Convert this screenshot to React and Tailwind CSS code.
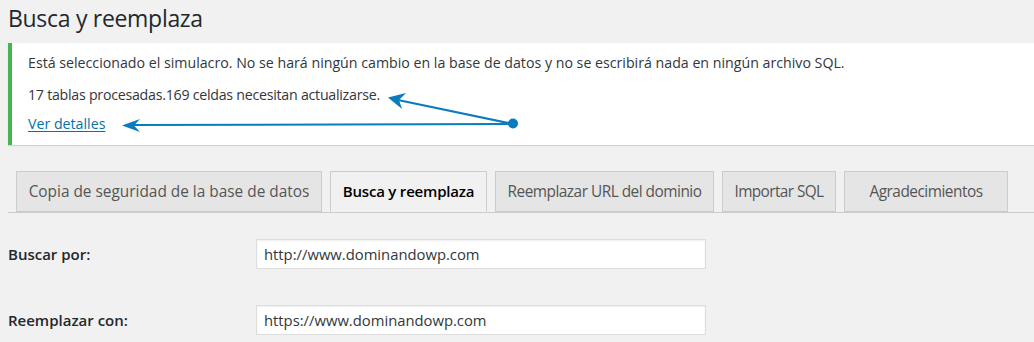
import React from 'react'

const tabs = [
  { label: 'Copia de seguridad de la base de datos', w: 'w-[306px]', t: 'tracking-normal' },
  { label: 'Busca y reemplaza', w: 'w-[157px]', active: true },
  { label: 'Reemplazar URL del dominio', w: 'w-[219px]', t: 'tracking-[-0.5px]' },
  { label: 'Importar SQL', w: 'w-[114px]', t: 'tracking-[-0.6px]' },
  { label: 'Agradecimientos', w: 'w-[164px]', t: 'tracking-[-0.5px]' },
]

export default function App() {
  return (
    <div className="relative w-[1034px] h-[342px] overflow-hidden bg-[#f1f1f1] text-[#23282d]" style={{ fontFamily: '"Open Sans", "Noto Sans", sans-serif' }}>
      {/* Título */}
      <h1 className="pl-2 pt-[1px] h-[43px] text-[23px] leading-[34px] font-normal tracking-[-0.3px]">Busca y reemplaza</h1>

      {/* Aviso */}
      <div className="ml-2 h-[102px] bg-white border-l-4 border-[#46b450] shadow-[0_1px_1px_rgba(0,0,0,0.12)] pl-4 pt-[10px] text-[14.2px] text-[#32373c]">
        <p className="leading-5">Está seleccionado el simulacro. No se hará ningún cambio en la base de datos y no se escribirá nada en ningún archivo SQL.</p>
        <p className="leading-5 mt-3 tracking-[-0.25px]">17 tablas procesadas.169 celdas necesitan actualizarse.</p>
        <a href="#" className="block w-fit leading-5 mt-[9px] text-[#0073aa] underline underline-offset-2">Ver detalles</a>
      </div>

      {/* Pestañas */}
      <div className="ml-2 mt-[27px] flex gap-2 pl-2 border-b border-[#ccc] h-[41px] items-end">
        {tabs.map((t) => (
          <div
            key={t.label}
            className={`${t.w} h-[41px] flex items-center justify-center border border-[#ccc] whitespace-nowrap ${
              t.active ? 'bg-[#f1f1f1] border-b-[#f1f1f1] text-black font-semibold text-[15px] tracking-[-0.2px]' : `bg-[#e5e5e5] text-[#555] text-[15.4px] ${t.t}`
            }`}
          >
            {t.label}
          </div>
        ))}
      </div>

      {/* Formulario */}
      <div className="flex flex-col gap-9 pt-[26px] pl-2">
        <div className="flex items-center">
          <label className="w-[248px] font-semibold text-[15px] text-[#23282d]">Buscar por:</label>
          <div className="w-[450px] h-[30px] bg-white border border-[#ddd] shadow-[inset_0_1px_2px_rgba(0,0,0,0.07)] flex items-center pl-[7px] text-[14.8px] text-[#32373c]">http://www.dominandowp.com</div>
        </div>
        <div className="flex items-center">
          <label className="w-[248px] font-semibold text-[15px] text-[#23282d]">Reemplazar con:</label>
          <div className="w-[450px] h-[30px] bg-white border border-[#ddd] shadow-[inset_0_1px_2px_rgba(0,0,0,0.07)] flex items-center pl-[7px] text-[14.8px] text-[#32373c]">https://www.dominandowp.com</div>
        </div>
      </div>

      {/* Flechas de anotación */}
      <svg className="absolute left-0 top-0 pointer-events-none" width="1034" height="342">
        <g stroke="#0a7bbd" strokeWidth="2" fill="#0a7bbd">
          <line x1="513" y1="124" x2="398" y2="100" />
          <line x1="513" y1="124" x2="132" y2="125" />
        </g>
        <g fill="#0a7bbd">
          <circle cx="513" cy="123.5" r="5" />
          <polygon points="388,97.5 406,93 399,100 402,109" />
          <polygon points="122,125.5 140,119 134,125.5 140,132" />
        </g>
      </svg>
    </div>
  )
}
